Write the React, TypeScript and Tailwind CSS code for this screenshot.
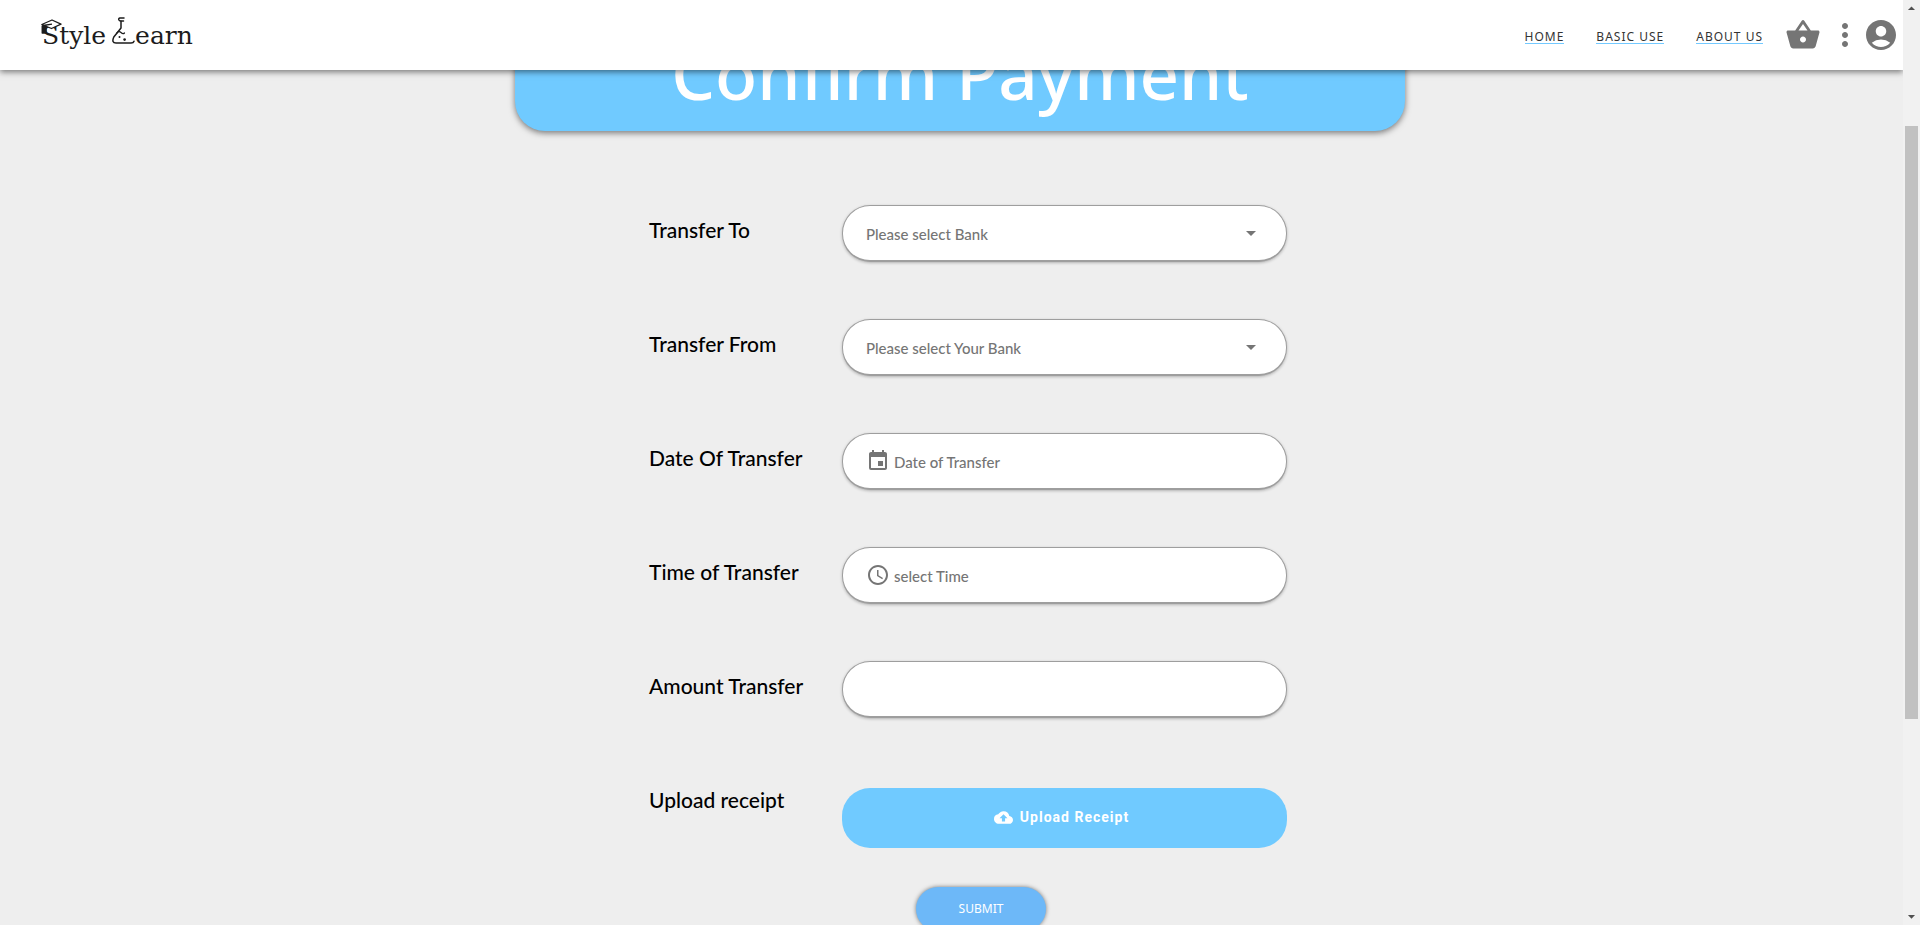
import React from 'react';
import {
  MdAccountCircle,
  MdAccessTime,
  MdArrowDropDown,
  MdArrowDropUp,
  MdCloudUpload,
  MdEvent,
  MdMoreVert,
  MdShoppingBasket,
} from 'react-icons/md';

const pill =
  'flex h-[57px] w-full items-center rounded-[28px] border border-b-2 border-[#9e9e9e] bg-white px-[23px] shadow-[0_1px_3px_rgba(0,0,0,0.25)]';
const fieldText =
  "min-w-0 flex-1 appearance-none bg-transparent pt-[2px] font-['Lato',sans-serif] text-[15px] font-medium leading-6 text-[#757575] outline-none placeholder:text-[#757575]";

function Logo() {
  return (
    <a
      href="#home"
      aria-label="Style Learn"
      className="relative flex items-baseline font-['DejaVu_Serif',serif] text-[25px] leading-8 text-[#1c1c1c]"
    >
      <svg
        className="absolute left-0 top-[2px]"
        width="22"
        height="16"
        viewBox="0 0 22 16"
        fill="none"
        stroke="#1c1c1c"
        strokeWidth="1.3"
        strokeLinejoin="round"
      >
        <path d="M0.8 5.5 L11 1 L20 5.2 L10.5 9.5 Z" fill="#fff" />
        <path d="M11 5.2 L2 6.5 V13.5" />
        <path d="M1.2 7 H5 V14 H1.2 Z" fill="#1c1c1c" />
      </svg>
      <span className="pl-px">Style</span>
      <svg
        className="ml-[6px]"
        width="23"
        height="27"
        viewBox="0 0 23 27"
        fill="none"
        stroke="#1c1c1c"
        strokeWidth="1.5"
        strokeLinecap="round"
        strokeLinejoin="round"
      >
        <path d="M12 1 H8 Q6.300 1.300 6.800 2.800 Q7.300 4 9 3.900 H11.500" />
        <path d="M9 4.200 V11 L1.800 20 Q-0.800 26 4 26 H19 Q21.500 25.900 22 24.200" />
        <path d="M4.800 16 Q7 13.500 9 15.500 T12.500 16" strokeWidth="1.2" />
        <circle cx="7.500" cy="20" r="1" fill="#1c1c1c" stroke="none" />
        <circle cx="12.600" cy="22.600" r="1.300" fill="#1c1c1c" stroke="none" />
      </svg>
      <span>earn</span>
    </a>
  );
}

function NavLink({ href, children }: { href: string; children: React.ReactNode }) {
  return (
    <a
      href={href}
      className="border-b border-[#73c9ff] font-['Noto_Sans',sans-serif] text-[12px] leading-3 tracking-[1px] text-[#333]"
    >
      {children}
    </a>
  );
}

function Row({ id, label, children }: { id: string; label: string; children: React.ReactNode }) {
  return (
    <div className="flex h-[114px] items-start">
      <label
        htmlFor={id}
        className="w-[193px] shrink-0 pt-[9px] font-['Lato',sans-serif] text-[21px] font-medium leading-8 text-black"
      >
        {label}
      </label>
      <div className="min-w-0 flex-1">{children}</div>
    </div>
  );
}

function BankSelect({ id, prompt }: { id: string; prompt: string }) {
  return (
    <div className={pill}>
      <select id={id} className={fieldText} defaultValue="">
        <option value="">{prompt}</option>
      </select>
      <MdArrowDropDown size={24} className="pointer-events-none text-[#757575]" />
    </div>
  );
}

function ScrollRail() {
  return (
    <div aria-hidden="true" className="flex w-[17px] shrink-0 flex-col items-center bg-[#f1f1f1]">
      <MdArrowDropUp size={17} className="shrink-0 text-[#505050]" />
      <div className="flex min-h-0 w-[13px] flex-1 flex-col">
        <div className="h-[12.2%]" />
        <div className="h-[66.6%] bg-[#c1c1c1]" />
      </div>
      <MdArrowDropDown size={17} className="shrink-0 text-[#505050]" />
    </div>
  );
}

export default function App() {
  return (
    <div className="flex h-screen overflow-hidden bg-[#eee]">
      <div className="flex min-w-0 flex-1 flex-col overflow-hidden">
        <header className="relative z-10 flex h-[70px] shrink-0 items-center justify-between bg-white pb-px pl-[41px] pr-1 shadow-[0_2px_6px_rgba(0,0,0,0.5)]">
          <Logo />
          <div className="flex items-center">
            <nav className="flex gap-8 pr-[22px] pt-[6px]">
              <NavLink href="#home">HOME</NavLink>
              <NavLink href="#basic-use">BASIC USE</NavLink>
              <NavLink href="#about">ABOUT US</NavLink>
            </nav>
            <button type="button" aria-label="Basket" className="mr-[6px] text-[#757575]">
              <MdShoppingBasket size={36} />
            </button>
            <button type="button" aria-label="More" className="text-[#757575]">
              <MdMoreVert size={36} />
            </button>
            <button type="button" aria-label="Account" className="text-[#757575]">
              <MdAccountCircle size={36} />
            </button>
          </div>
        </header>

        <main className="min-h-0 flex-1 pl-[17px]">
          <div className="mx-auto -mt-[70px] flex h-[131px] max-w-[890px] items-end justify-center rounded-[30px] bg-[#70caff] pb-4 shadow-[0_2px_6px_rgba(0,0,0,0.5)]">
            <h1 className="font-['Noto_Sans',sans-serif] text-[69px] font-medium leading-[84px] text-white">
              Confirm Payment
            </h1>
          </div>

          <div className="pl-4">
            <form className="mx-auto max-w-[638px] pt-[74px]">
              <Row id="to" label="Transfer To">
                <BankSelect id="to" prompt="Please select Bank" />
              </Row>
              <Row id="from" label="Transfer From">
                <BankSelect id="from" prompt="Please select Your Bank" />
              </Row>
              <Row id="date" label="Date Of Transfer">
                <div className={pill}>
                  <MdEvent size={24} className="mr-1 shrink-0 text-[#757575]" />
                  <input id="date" type="text" placeholder="Date of Transfer" className={fieldText} />
                </div>
              </Row>
              <Row id="time" label="Time of Transfer">
                <div className={pill}>
                  <MdAccessTime size={24} className="mr-1 shrink-0 text-[#757575]" />
                  <input id="time" type="text" placeholder="select Time" className={fieldText} />
                </div>
              </Row>
              <Row id="amount" label="Amount Transfer">
                <div className={pill}>
                  <input id="amount" type="text" className={fieldText} />
                </div>
              </Row>
              <Row id="receipt" label="Upload receipt">
                <div className="pt-[13px]">
                  <button
                    id="receipt"
                    type="button"
                    className="flex h-[60px] w-full items-center justify-center gap-[7px] rounded-[28px] bg-[#70caff] pb-[2px] pr-[6px] font-['Roboto',sans-serif] text-[14px] font-bold tracking-[1px] text-white"
                  >
                    <MdCloudUpload size={19} />
                    Upload Receipt
                  </button>
                </div>
              </Row>
              <div className="-mt-[2px] flex justify-center pl-[26px]">
                <button
                  type="submit"
                  className="h-[44px] w-[130px] rounded-full bg-[#6db8f8] font-['Noto_Sans',sans-serif] text-[12px] text-white shadow-[0_0_4px_rgba(0,0,0,0.5)]"
                >
                  SUBMIT
                </button>
              </div>
            </form>
          </div>
        </main>
      </div>
      <ScrollRail />
    </div>
  );
}
